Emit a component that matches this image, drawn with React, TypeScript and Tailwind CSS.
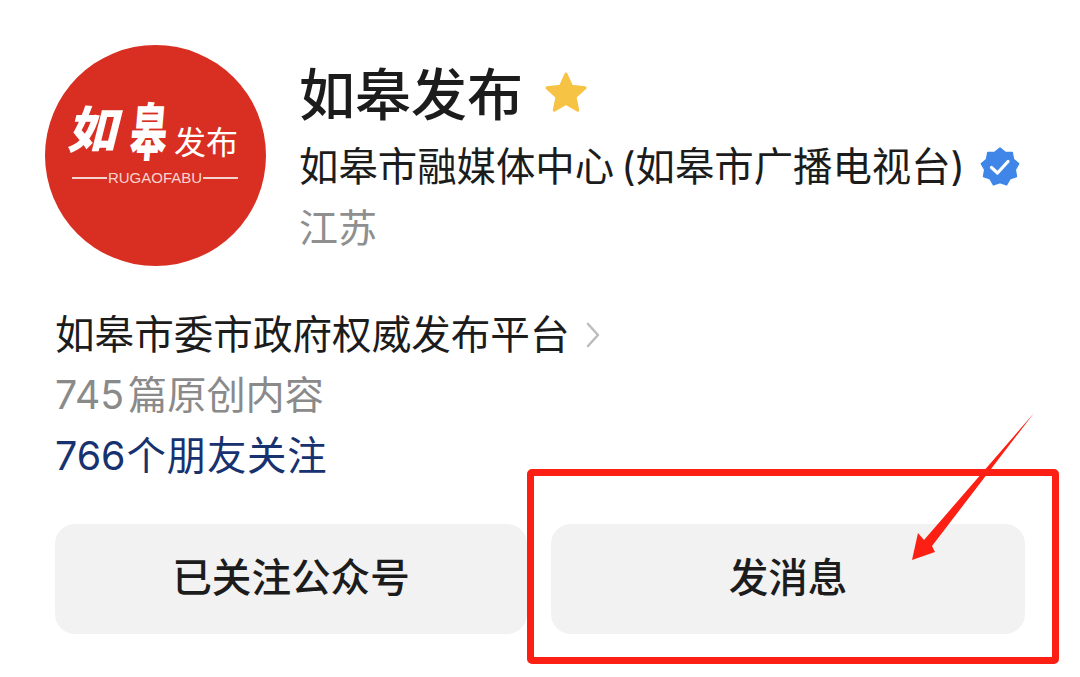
const FONT = "font-['Inter','Noto_Sans_CJK_SC',sans-serif]";

function starPoints(cx: number, cy: number, outer: number, inner: number, n: number, rot = -90) {
  const pts: string[] = [];
  for (let i = 0; i < n * 2; i++) {
    const r = i % 2 === 0 ? outer : inner;
    const a = ((rot + (i * 180) / n) * Math.PI) / 180;
    pts.push(`${(cx + r * Math.cos(a)).toFixed(2)},${(cy + r * Math.sin(a)).toFixed(2)}`);
  }
  return pts.join(" ");
}

function Logo() {
  return (
    <div className="relative h-[221px] w-[221px] shrink-0 overflow-hidden rounded-full bg-[#d92f22] text-white">
      <span className="absolute left-[26px] top-[55px] skew-x-[-14deg] text-[50px] leading-[60px] font-black">如</span>
      <span className="absolute left-[81px] top-[57px] skew-x-[-8deg] scale-x-[0.8] scale-y-[1.35] text-[46px] leading-[60px] font-black">皋</span>
      <span className="absolute left-[129px] top-[80px] text-[32px] leading-[36px] font-normal">发布</span>
      <div className="absolute left-[27px] right-[28px] top-[125px] flex items-center gap-[1px]">
        <div className="h-[2px] flex-1 bg-[#f6d5d0]" />
        <span className="font-['Liberation_Sans',sans-serif] text-[15px] leading-[16px] text-[#f6d5d0]">RUGAOFABU</span>
        <div className="h-[2px] flex-1 bg-[#f6d5d0]" />
      </div>
    </div>
  );
}

export default function App() {
  return (
    <div className={`relative h-[677px] w-[1080px] overflow-hidden bg-white ${FONT} text-[#1c1c1c]`}>
      <div className="flex flex-col pl-[45px] pt-[45px]">
        <div className="flex gap-[33px]">
          <Logo />
          <div className="flex flex-col">
            <div className="flex h-[100px] items-center">
              <span className="text-[56px] leading-[100px] font-medium">如皋发布</span>
              <svg width="46" height="46" viewBox="0 0 46 46" className="ml-[20px] mt-[-5px]">
                <polygon points={starPoints(23, 24, 20, 9.5, 5)} fill="#f6c344" stroke="#f6c344" strokeWidth="3" strokeLinejoin="round" />
              </svg>
            </div>
            <div className="mt-[-1px] flex h-[46px] items-center text-[39.4px] leading-[46px] whitespace-nowrap">
              <span>如皋市融媒体中心</span>
              <span className="ml-[7px]">(如皋市广播电视台)</span>
              <svg width="40" height="40" viewBox="0 0 40 40" className="ml-[15px] shrink-0">
                <polygon points={starPoints(20, 20, 19, 15.5, 9)} fill="#3f86e8" stroke="#3f86e8" strokeWidth="1.5" strokeLinejoin="round" />
                <path d="M11.5 20.5 L17.5 26 L28 14.5" fill="none" stroke="#fff" strokeWidth="3.2" strokeLinecap="round" strokeLinejoin="round" />
              </svg>
            </div>
            <span className="mt-[15px] text-[39px] leading-[46px] text-[#8f8f8f]">江苏</span>
          </div>
        </div>
        <div className="mt-[44px] flex flex-col pl-[10px]">
          <div className="flex h-[50px] items-center">
            <span className="text-[39.6px] leading-[50px]">如皋市委市政府权威发布平台</span>
            <svg width="14" height="26" viewBox="0 0 14 26" className="ml-[16px]">
              <path d="M2 2 L12 13 L2 24" fill="none" stroke="#bdbdbd" strokeWidth="2.6" strokeLinecap="round" strokeLinejoin="round" />
            </svg>
          </div>
          <div className="mt-[10px] flex gap-[4px] text-[39.2px] leading-[50px] text-[#8a8a8a]">
            <span>745</span>
            <span>篇原创内容</span>
          </div>
          <div className="mt-[11px] flex gap-[1px] text-[39.4px] leading-[50px] text-[#17326f]">
            <span>766</span>
            <span className="tracking-[0.8px]">个朋友关注</span>
          </div>
          <div className="mt-[43px] flex gap-[24px]">
            <div className="flex h-[110px] w-[472px] items-center justify-center rounded-[20px] bg-[#f2f2f2] text-[39.6px] font-medium">已关注公众号</div>
            <div className="flex h-[110px] w-[474px] items-center justify-center rounded-[20px] bg-[#f2f2f2] text-[39.6px] font-medium">发消息</div>
          </div>
        </div>
      </div>
      <div className="absolute left-[527px] top-[469px] h-[195px] w-[532px] rounded-[5px] border-[7px] border-[#fb2013]" />
      <svg width="1080" height="677" viewBox="0 0 1080 677" className="absolute left-0 top-0">
        <polygon points="1034,413 932,546 935,552 912,560 918,533 924,540" fill="#fb2013" />
      </svg>
    </div>
  );
}
